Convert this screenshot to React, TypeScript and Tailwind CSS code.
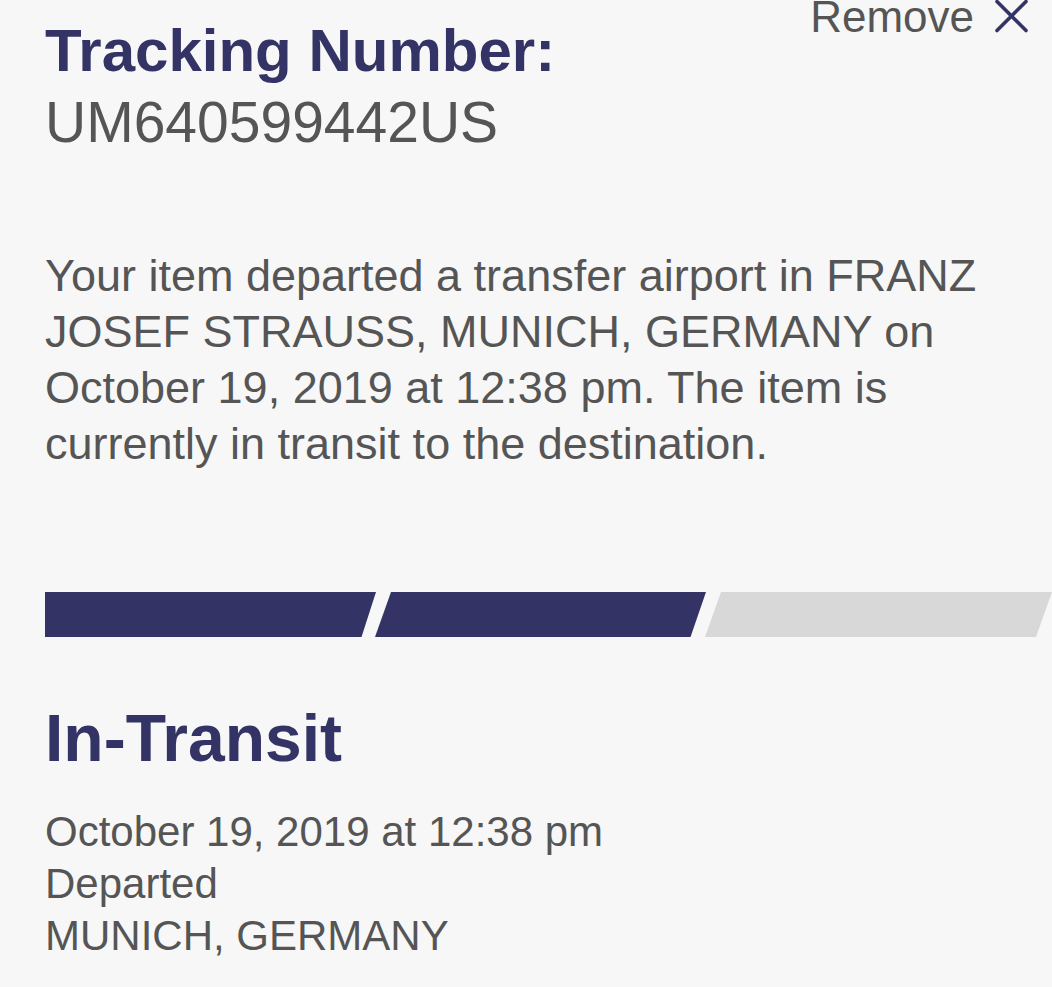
import React from "react";

export default function App() {
  return (
    <div className="relative min-h-[987px] w-full overflow-hidden bg-[#f7f7f7] font-['Liberation_Sans','Helvetica_Neue',Arial,sans-serif] text-[#555555]">
      <div className="absolute right-[24px] top-[-5px] flex items-start gap-[21px]">
        <span className="text-[44px] leading-[44px] text-[#555555]">Remove</span>
        <svg width="33" height="33" viewBox="0 0 33 33" className="mt-[5px]">
          <path d="M2 1.5 L31 30.5 M31 1.5 L2 30.5" stroke="#333366" strokeWidth="3.6" strokeLinecap="round" fill="none" />
        </svg>
      </div>

      <div className="px-[45px] pt-[21px]">
        <h1 className="text-[60px] font-bold leading-[60px] text-[#333366]">Tracking Number:</h1>
        <div className="mt-[11px] text-[57px] leading-[60px]">UM640599442US</div>

        <p className="mt-[96px] text-[45px] leading-[56px]">
          Your item departed a transfer airport in FRANZ JOSEF STRAUSS, MUNICH, GERMANY on October 19, 2019 at 12:38 pm. The item is currently in transit to the destination.
        </p>
      </div>

      <div className="mt-[120px] flex pl-[45px]">
        <div className="h-[45px] w-[331px] shrink-0 bg-[#333366] [clip-path:polygon(0_0,100%_0,calc(100%-14.5px)_100%,0_100%)]" />
        <div className="ml-[-1px] h-[45px] w-[331px] shrink-0 bg-[#333366] [clip-path:polygon(16px_0,100%_0,calc(100%-15.5px)_100%,0_100%)]" />
        <div className="ml-[-1px] h-[45px] w-[347px] shrink-0 bg-[#d8d8d8] [clip-path:polygon(16px_0,100%_0,calc(100%-16px)_100%,0_100%)]" />
      </div>

      <div className="px-[45px]">
        <h2 className="mt-[68px] text-[66px] font-bold leading-[66px] text-[#333366]">In-Transit</h2>
        <div className="mt-[35px] text-[42px] leading-[52px]">
          <div>October 19, 2019 at 12:38 pm</div>
          <div>Departed</div>
          <div>MUNICH, GERMANY</div>
        </div>
      </div>
    </div>
  );
}
